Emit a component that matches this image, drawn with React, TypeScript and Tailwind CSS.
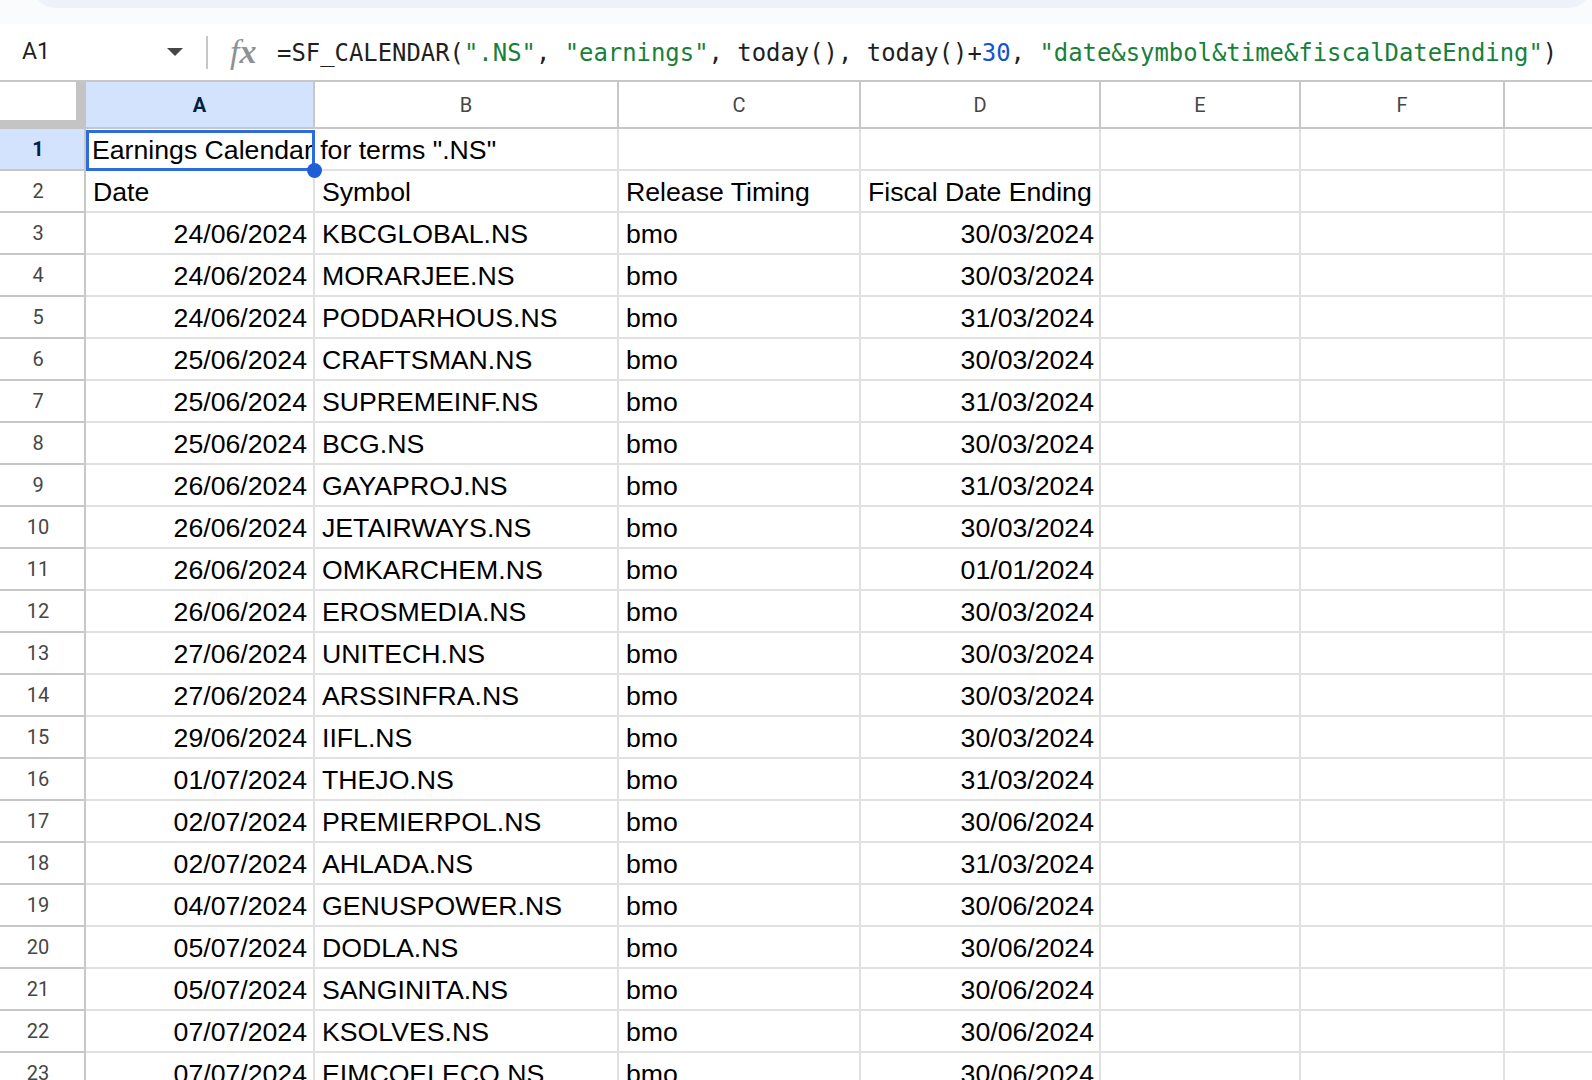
import React from "react";

const cols = [
  { key: "A", w: "w-[229px]" },
  { key: "B", w: "w-[304px]" },
  { key: "C", w: "w-[242px]" },
  { key: "D", w: "w-[240px]" },
  { key: "E", w: "w-[200px]" },
  { key: "F", w: "w-[204px]" },
];

const data: [string, string, string, string][] = [
  ["24/06/2024", "KBCGLOBAL.NS", "bmo", "30/03/2024"],
  ["24/06/2024", "MORARJEE.NS", "bmo", "30/03/2024"],
  ["24/06/2024", "PODDARHOUS.NS", "bmo", "31/03/2024"],
  ["25/06/2024", "CRAFTSMAN.NS", "bmo", "30/03/2024"],
  ["25/06/2024", "SUPREMEINF.NS", "bmo", "31/03/2024"],
  ["25/06/2024", "BCG.NS", "bmo", "30/03/2024"],
  ["26/06/2024", "GAYAPROJ.NS", "bmo", "31/03/2024"],
  ["26/06/2024", "JETAIRWAYS.NS", "bmo", "30/03/2024"],
  ["26/06/2024", "OMKARCHEM.NS", "bmo", "01/01/2024"],
  ["26/06/2024", "EROSMEDIA.NS", "bmo", "30/03/2024"],
  ["27/06/2024", "UNITECH.NS", "bmo", "30/03/2024"],
  ["27/06/2024", "ARSSINFRA.NS", "bmo", "30/03/2024"],
  ["29/06/2024", "IIFL.NS", "bmo", "30/03/2024"],
  ["01/07/2024", "THEJO.NS", "bmo", "31/03/2024"],
  ["02/07/2024", "PREMIERPOL.NS", "bmo", "30/06/2024"],
  ["02/07/2024", "AHLADA.NS", "bmo", "31/03/2024"],
  ["04/07/2024", "GENUSPOWER.NS", "bmo", "30/06/2024"],
  ["05/07/2024", "DODLA.NS", "bmo", "30/06/2024"],
  ["05/07/2024", "SANGINITA.NS", "bmo", "30/06/2024"],
  ["07/07/2024", "KSOLVES.NS", "bmo", "30/06/2024"],
  ["07/07/2024", "EIMCOELECO.NS", "bmo", "30/06/2024"],
];

const cellBase =
  "h-full shrink-0 border-r-2 border-b-2 border-[#e1e1e1] flex items-center px-[7px] pt-[2px] whitespace-nowrap overflow-hidden";

function RowHeader({ n, selected }: { n: number; selected?: boolean }) {
  return (
    <div
      className={
        "w-[86px] h-full shrink-0 border-r-2 border-b-2 border-[#c7c7c7] flex items-center justify-center pr-[8px] text-[20px] " +
        (selected ? "bg-[#d3e3fd] text-[#041e49] font-bold" : "text-[#444746]")
      }
      style={{ fontFamily: "Roboto, Arial, sans-serif" }}
    >
      {n}
    </div>
  );
}

function EmptyCells() {
  return (
    <>
      <div className={cellBase + " w-[200px]"} />
      <div className={cellBase + " w-[204px]"} />
      <div className="h-full flex-1 border-b-2 border-[#e1e1e1]" />
    </>
  );
}

export default function App() {
  return (
    <div
      className="w-[1592px] h-[1080px] overflow-hidden bg-white text-black"
      style={{ fontFamily: '"Liberation Sans", Arial, sans-serif' }}
    >
      {/* top strip */}
      <div className="h-[24px] bg-[#f9fbfd] overflow-hidden">
        <div className="ml-[32px] -mt-[40px] h-[48px] rounded-[24px] bg-[#edf2fa]" />
      </div>

      {/* formula bar */}
      <div className="h-[58px] flex items-center border-b-2 border-[#c7c7c7] bg-white">
        <div className="w-[206px] flex items-center justify-between pl-[22px] pr-[23px]">
          <span
            className="text-[23px] text-[#1f1f1f]"
            style={{ fontFamily: "Roboto, Arial, sans-serif" }}
          >
            A1
          </span>
          <svg width="16" height="8" viewBox="0 0 16 8">
            <path d="M0 0 L16 0 L8 8 Z" fill="#444746" />
          </svg>
        </div>
        <div className="w-[2px] h-[33px] bg-[#c7c7c7]" />
        <span
          className="ml-[22px] w-[34px] text-[34px] italic text-[#8e9194] leading-none"
          style={{ fontFamily: '"Liberation Serif", "DejaVu Serif", serif' }}
        >
          f<span className="font-bold">x</span>
        </span>
        <div
          className="ml-[13px] mt-[3px] text-[23.9px] text-[#1f1f1f] whitespace-pre"
          style={{ fontFamily: '"DejaVu Sans Mono", "Liberation Mono", monospace' }}
        >
          =SF_CALENDAR(<span className="text-[#188038]">".NS"</span>,{" "}
          <span className="text-[#188038]">"earnings"</span>, today(), today()+
          <span className="text-[#1155cc]">30</span>,{" "}
          <span className="text-[#188038]">"date&amp;symbol&amp;time&amp;fiscalDateEnding"</span>)
        </div>
      </div>

      {/* column header row */}
      <div
        className="flex h-[47px]"
        style={{ fontFamily: "Roboto, Arial, sans-serif" }}
      >
        <div className="w-[86px] h-full shrink-0 bg-[#c4c4c4]">
          <div className="w-[76px] h-[38px] bg-white" />
        </div>
        {cols.map((c) => (
          <div
            key={c.key}
            className={
              c.w +
              " h-full shrink-0 border-r-2 border-b-2 border-[#c7c7c7] flex items-center justify-center text-[20px] " +
              (c.key === "A"
                ? "bg-[#d3e3fd] text-[#041e49] font-bold"
                : "text-[#444746]")
            }
          >
            {c.key}
          </div>
        ))}
        <div className="h-full flex-1 border-b-2 border-[#c7c7c7]" />
      </div>

      {/* row 1 */}
      <div className="flex h-[42px] text-[26.67px]">
        <RowHeader n={1} selected />
        <div className="relative w-[229px] h-full shrink-0 border-b-2 border-[#e1e1e1] flex items-center px-[6px] pt-[2px] whitespace-nowrap">
          <span className="relative z-10">Earnings Calendar for terms ".NS"</span>
          <div className="absolute left-0 top-[1px] w-[229px] h-[41px] border-[3px] border-[#2b6ce0] z-20" />
          <div className="absolute left-[221px] top-[34px] w-[15px] h-[15px] rounded-full bg-[#1f5fd6] z-30" />
        </div>
        <div className={cellBase + " w-[304px]"} />
        <div className={cellBase + " w-[242px]"} />
        <div className={cellBase + " w-[240px]"} />
        <EmptyCells />
      </div>

      {/* row 2 */}
      <div className="flex h-[42px] text-[26.67px]">
        <RowHeader n={2} />
        <div className={cellBase + " w-[229px]"}>Date</div>
        <div className={cellBase + " w-[304px]"}>Symbol</div>
        <div className={cellBase + " w-[242px]"}>Release Timing</div>
        <div className={cellBase + " w-[240px]"}>Fiscal Date Ending</div>
        <EmptyCells />
      </div>

      {data.map((r, i) => (
        <div key={i} className="flex h-[42px] text-[26.67px]">
          <RowHeader n={i + 3} />
          <div className={cellBase + " w-[229px] justify-end pr-[6px]"}>{r[0]}</div>
          <div className={cellBase + " w-[304px]"}>{r[1]}</div>
          <div className={cellBase + " w-[242px]"}>{r[2]}</div>
          <div className={cellBase + " w-[240px] justify-end pr-[5px]"}>{r[3]}</div>
          <EmptyCells />
        </div>
      ))}
    </div>
  );
}
